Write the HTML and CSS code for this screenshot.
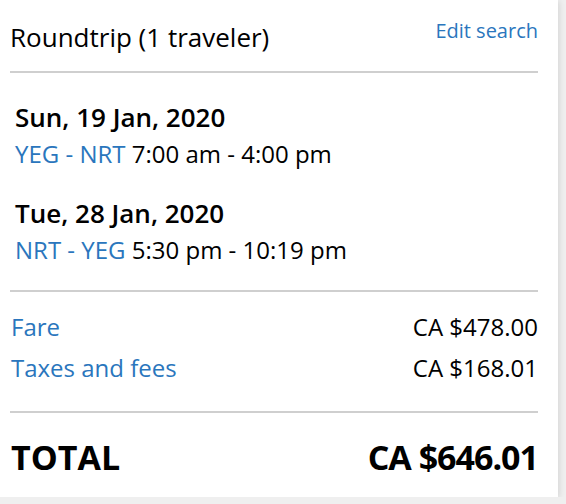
FILE: index.html
```html
<!DOCTYPE html>
<html lang="en">
<head>
    <meta charset="UTF-8">
    <meta name="viewport" content="width=device-width, initial-scale=1.0">
    <title>Trip summary</title>
<link rel="stylesheet" href="styles.css">
</head>
<body>
    <section class="card">
        <header class="head">
            <h2 class="trip-type">Roundtrip (1 traveler)</h2>
            <a class="edit" href="#">Edit search</a>
        </header>

        <div class="legs">
            <div class="leg">
                <div class="leg-date">Sun, 19 Jan, 2020</div>
                <div class="leg-route"><span class="blue">YEG - NRT</span> 7:00 am - 4:00 pm</div>
            </div>
            <div class="leg">
                <div class="leg-date">Tue, 28 Jan, 2020</div>
                <div class="leg-route"><span class="blue">NRT - YEG</span> 5:30 pm - 10:19 pm</div>
            </div>
        </div>

        <div class="prices">
            <div class="price-row"><a class="blue" href="#">Fare</a><span>CA $478.00</span></div>
            <div class="price-row"><a class="blue" href="#">Taxes and fees</a><span>CA $168.01</span></div>
        </div>

        <div class="total">
            <span>TOTAL</span>
            <span class="total-amount">CA $646.01</span>
        </div>
    </section>
</body>
</html>
```

FILE: styles.css
```css
body {
  margin: 0;
  background: #efefef;
  font-family: "Open Sans", "Noto Sans", Arial, sans-serif;
  color: #000;
}
a { text-decoration: none; }
.blue { color: #2a76bd; }

.card {
  width: 558px;
  height: 497px;
  box-sizing: border-box;
  background: #fff;
  padding: 0 20px 0 10px;
  box-shadow: 1px 1px 6px rgba(0,0,0,.12);
}

.head {
  display: flex;
  justify-content: space-between;
  align-items: flex-start;
  height: 73px;
  border-bottom: 2px solid #cfcfcf;
  box-sizing: border-box;
}
.trip-type {
  margin: 19px 0 0;
  font-size: 26px;
  line-height: 36px;
  font-weight: 400;
}
.edit {
  margin-top: 17px;
  font-size: 20px;
  line-height: 28px;
  color: #2a76bd;
}

.legs {
  padding: 26px 0 21px 5px;
  border-bottom: 2px solid #cfcfcf;
}
.leg + .leg { margin-top: 22px; }
.leg-date {
  font-size: 26px;
  font-weight: 600;
  line-height: 36px;
}
.leg-route {
  font-size: 24px;
  line-height: 38px;
}

.prices {
  padding: 14px 0 23px 1px;
  border-bottom: 2px solid #cfcfcf;
}
.price-row {
  display: flex;
  justify-content: space-between;
  font-size: 24px;
  line-height: 41px;
}

.total {
  display: flex;
  justify-content: space-between;
  align-items: center;
  height: 84px;
  box-sizing: border-box;
  padding: 4px 0 0 1px;
  font-size: 34px;
  font-weight: 700;
}
.total-amount { letter-spacing: -1px; }
```
